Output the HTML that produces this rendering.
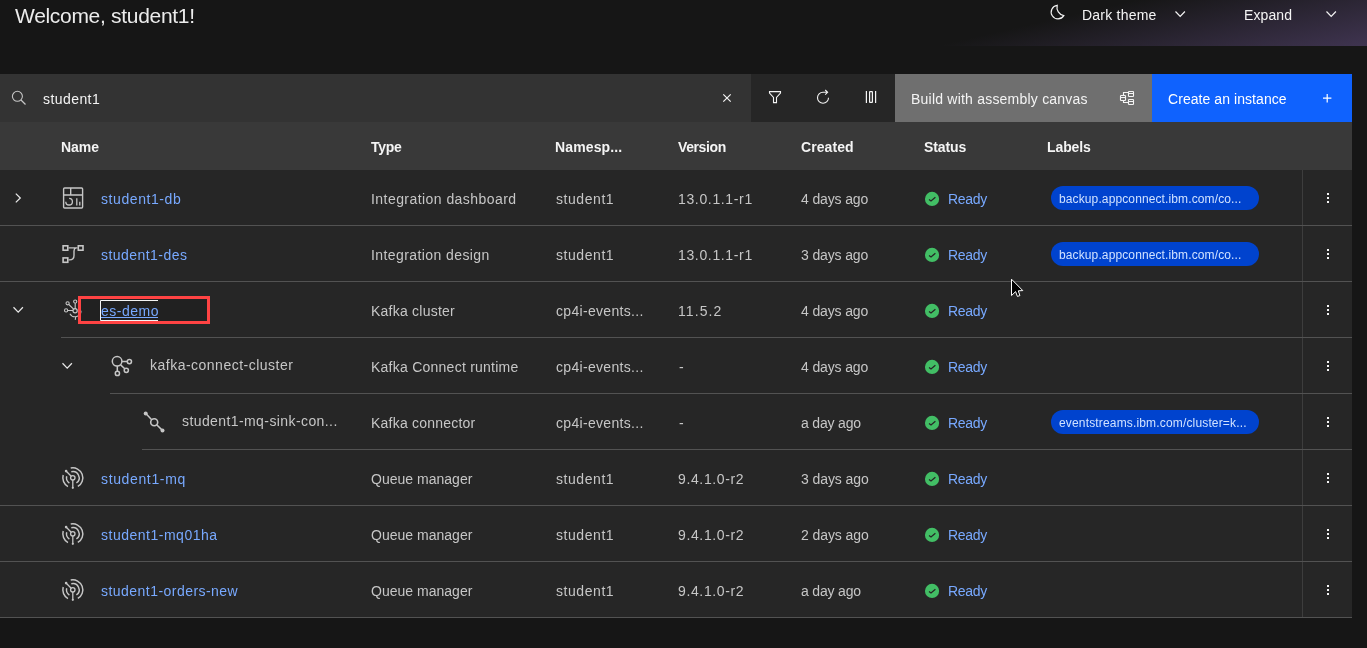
<!DOCTYPE html>
<html><head><meta charset="utf-8">
<style>
*{margin:0;padding:0;box-sizing:border-box}
html,body{width:1367px;height:648px;overflow:hidden;background:#161616;font-family:"Liberation Sans",sans-serif;color:#c6c6c6}
.a{position:absolute;white-space:nowrap;line-height:16px;will-change:transform}
.search{position:absolute;left:0;top:74px;width:751px;height:48px;background:#333333}
.icons{position:absolute;left:751px;top:74px;width:144px;height:48px;background:#262626}
.build{position:absolute;left:895px;top:74px;width:257px;height:48px;background:#6f6f6f}
.create{position:absolute;left:1152px;top:74px;width:200px;height:48px;background:#0f62fe}
.thead{position:absolute;left:0;top:122px;width:1352px;height:48px;background:#393939}
.row{position:absolute;left:0;width:1352px;height:56px;background:#262626}
.bd{position:absolute;height:1px;background:#525252;right:0;bottom:0}
.vdiv{position:absolute;left:1302px;top:0;width:1px;height:55px;background:#3d3d3d}
.tag{position:absolute;left:1051px;width:208px;height:24px;border-radius:12px;background:#0043ce}
.tagt{line-height:24px}
svg{position:absolute;overflow:visible}

</style></head><body>
<svg width="1367" height="46" style="position:absolute;left:0;top:0">
<defs><linearGradient id="g" gradientUnits="userSpaceOnUse" x1="57" y1="248" x2="78.6" y2="342"><stop offset="0" stop-color="#161616"/><stop offset="1" stop-color="#3f3450"/></linearGradient></defs>
<rect width="1367" height="46" fill="url(#g)"/>
</svg>
<div class="search"></div>
<div class="icons"></div>
<div class="build"></div>
<div class="create"></div>
<div class="thead"></div>
<div class="row" style="top:170px"><div class="vdiv"></div><div class="bd" style="left:0px"></div></div>
<div class="tag" style="top:186px"></div>
<div class="row" style="top:226px"><div class="vdiv"></div><div class="bd" style="left:0px"></div></div>
<div class="tag" style="top:242px"></div>
<div class="row" style="top:282px"><div class="vdiv"></div><div class="bd" style="left:61px"></div></div>
<div class="row" style="top:338px"><div class="vdiv"></div><div class="bd" style="left:110px"></div></div>
<div class="row" style="top:394px"><div class="vdiv"></div><div class="bd" style="left:142px"></div></div>
<div class="tag" style="top:410px"></div>
<div class="row" style="top:450px"><div class="vdiv"></div><div class="bd" style="left:0px"></div></div>
<div class="row" style="top:506px"><div class="vdiv"></div><div class="bd" style="left:0px"></div></div>
<div class="row" style="top:562px"><div class="vdiv"></div><div class="bd" style="left:0px"></div></div>
<svg width="1367" height="648" style="left:0;top:0;position:absolute"><path d="M1057.2,5.3 A6.8,6.8 0 1 0 1063.8,15.6 A8.4,8.4 0 0 1 1057.2,5.3 Z" fill="none" stroke="#f4f4f4" stroke-width="1.2" stroke-linejoin="miter"/>
<path d="M1175.5,11.5 L1180.2,16.4 L1184.9,11.5" fill="none" stroke="#f4f4f4" stroke-width="1.2"/>
<path d="M1326.5,11.5 L1331.2,16.4 L1335.9,11.5" fill="none" stroke="#f4f4f4" stroke-width="1.2"/>
<circle cx="17.4" cy="96.3" r="5" fill="none" stroke="#c6c6c6" stroke-width="1.1"/>
<path d="M21,100 L25.5,104.5" stroke="#c6c6c6" stroke-width="1.2"/>
<path d="M723.3,94.3 L730.7,101.7 M730.7,94.3 L723.3,101.7" stroke="#f4f4f4" stroke-width="1.2"/>
<path d="M769.5,91.6 H780.5 V93 L776.5,97.4 V102.6 H773.5 V97.4 L769.5,93 Z" fill="none" stroke="#f4f4f4" stroke-width="1.1" stroke-linejoin="miter"/>
<path d="M823,92.3 A5.5,5.5 0 1 0 828.5,97.8" fill="none" stroke="#f4f4f4" stroke-width="1.1"/>
<path d="M823,92.3 H828 M825.2,90 L827.6,92.3 L825.2,94.6" fill="none" stroke="#f4f4f4" stroke-width="1.1"/>
<path d="M866.4,91 V103 M875.6,91 V103" stroke="#f4f4f4" stroke-width="1.2"/>
<rect x="869.6" y="91.6" width="2.8" height="10.8" rx="0.4" fill="none" stroke="#f4f4f4" stroke-width="1.2"/>
<rect x="1120.5" y="95.5" width="5" height="5" rx="0.6" fill="none" stroke="#f4f4f4" stroke-width="1.1"/>
<rect x="1121" y="97" width="4" height="1" fill="#f4f4f4"/>
<rect x="1128.5" y="91.5" width="5" height="5" rx="0.6" fill="none" stroke="#f4f4f4" stroke-width="1.1"/>
<rect x="1129" y="93" width="4" height="1" fill="#f4f4f4"/>
<rect x="1128.5" y="99.5" width="5" height="5" rx="0.6" fill="none" stroke="#f4f4f4" stroke-width="1.1"/>
<rect x="1129" y="101" width="4" height="1" fill="#f4f4f4"/>
<path d="M1123.5,95 V92.5 H1128 M1123.5,101 V102.5 H1128" fill="none" stroke="#f4f4f4" stroke-width="1.1"/>
<path d="M1327.2,94 V102.4 M1323,98.2 H1331.4" stroke="#ffffff" stroke-width="1.2"/>
<path d="M15.8,193.6 L20.3,198 L15.8,202.4" fill="none" stroke="#e8e8e8" stroke-width="1.25"/>
<path d="M13.5,307.2 L18.2,312.2 L22.9,307.2" fill="none" stroke="#e8e8e8" stroke-width="1.25"/>
<path d="M62.5,363.2 L67.2,368.2 L71.9,363.2" fill="none" stroke="#e8e8e8" stroke-width="1.25"/>
<rect x="63.6" y="188" width="19" height="20" rx="1" fill="none" stroke="#c6c6c6" stroke-width="1.4"/>
<path d="M63.6,195 H82.6 M70.7,188 V195" stroke="#c6c6c6" stroke-width="1.4"/>
<path d="M69.1,198.4 A3.3,3.3 0 1 1 65.8,201.7" fill="none" stroke="#c6c6c6" stroke-width="1.3"/>
<path d="M76.8,198.2 V205.6 M79.8,201.7 V205.6" stroke="#c6c6c6" stroke-width="1.3"/>
<rect x="63.1" y="245.8" width="4.7" height="4.4" fill="none" stroke="#c6c6c6" stroke-width="1.6"/>
<rect x="78.3" y="245.8" width="4.7" height="4.4" fill="none" stroke="#c6c6c6" stroke-width="1.6"/>
<rect x="63.1" y="257.9" width="4.7" height="4.4" fill="none" stroke="#c6c6c6" stroke-width="1.6"/>
<path d="M68.6,247.9 H77.5 M76,247.9 Q74,248.5 74,251 V255.5 Q74,259.9 69.6,259.9 H68.6" fill="none" stroke="#c6c6c6" stroke-width="1.4"/>
<circle cx="75.1" cy="310.7" r="2.1" fill="none" stroke="#c6c6c6" stroke-width="1.2"/>
<circle cx="75.2" cy="301.6" r="1.6" fill="none" stroke="#c6c6c6" stroke-width="1.1"/>
<circle cx="67.6" cy="303.3" r="1.6" fill="none" stroke="#c6c6c6" stroke-width="1.1"/>
<circle cx="66.1" cy="310.4" r="1.6" fill="none" stroke="#c6c6c6" stroke-width="1.1"/>
<path d="M75.2,303.2 V308.6 M68.8,304.5 L73.6,309.2 M67.7,310.5 H73 M69.9,313.7 A6,6 0 0 0 81.1,310.7 M75.8,316.6 L75.2,319.8" fill="none" stroke="#c6c6c6" stroke-width="1.1"/>
<circle cx="117.1" cy="361.3" r="4.8" fill="none" stroke="#c6c6c6" stroke-width="1.5"/>
<circle cx="129.4" cy="361.6" r="2.1" fill="none" stroke="#c6c6c6" stroke-width="1.5"/>
<circle cx="126.3" cy="370.3" r="2.1" fill="none" stroke="#c6c6c6" stroke-width="1.5"/>
<circle cx="117.4" cy="373.4" r="2.1" fill="none" stroke="#c6c6c6" stroke-width="1.5"/>
<path d="M121.9,361.5 H127.3 M120.6,364.9 L124.8,368.8 M117.3,366.1 V371.3" fill="none" stroke="#c6c6c6" stroke-width="1.5"/>
<circle cx="154.2" cy="422.3" r="3.5" fill="none" stroke="#c6c6c6" stroke-width="1.6"/>
<circle cx="145.7" cy="413.5" r="2" fill="#c6c6c6"/>
<circle cx="162.5" cy="430.5" r="2" fill="#c6c6c6"/>
<path d="M145.8,413.6 L151.7,419.8 M156.7,424.8 L162.4,430.4" stroke="#c6c6c6" stroke-width="1.5"/>
<circle cx="72.8" cy="477.8" r="2.2" fill="none" stroke="#c6c6c6" stroke-width="1.3"/>
<path d="M72.8,480.0 V487.8" stroke="#c6c6c6" stroke-width="1.3" fill="none"/>
<circle cx="72.8" cy="487.8" r="1.1" fill="#c6c6c6"/>
<path d="M71.2,476.2 L66.3,471.3" stroke="#c6c6c6" stroke-width="1.3" fill="none"/>
<circle cx="66.1" cy="471.1" r="1.3" fill="#c6c6c6"/>
<path d="M70.72,468.02 A10.0,10.0 0 0 1 77.80,486.46" stroke="#c6c6c6" stroke-width="1.45" fill="none"/>
<path d="M71.28,471.69 A6.3,6.3 0 0 1 76.41,482.96" stroke="#c6c6c6" stroke-width="1.45" fill="none"/>
<path d="M67.95,486.55 A10.0,10.0 0 0 1 63.19,475.04" stroke="#c6c6c6" stroke-width="1.45" fill="none"/>
<path d="M69.37,483.08 A6.3,6.3 0 0 1 66.69,476.28" stroke="#c6c6c6" stroke-width="1.45" fill="none"/>
<circle cx="72.8" cy="533.8" r="2.2" fill="none" stroke="#c6c6c6" stroke-width="1.3"/>
<path d="M72.8,536.0 V543.8" stroke="#c6c6c6" stroke-width="1.3" fill="none"/>
<circle cx="72.8" cy="543.8" r="1.1" fill="#c6c6c6"/>
<path d="M71.2,532.1999999999999 L66.3,527.3" stroke="#c6c6c6" stroke-width="1.3" fill="none"/>
<circle cx="66.1" cy="527.0999999999999" r="1.3" fill="#c6c6c6"/>
<path d="M70.72,524.02 A10.0,10.0 0 0 1 77.80,542.46" stroke="#c6c6c6" stroke-width="1.45" fill="none"/>
<path d="M71.28,527.69 A6.3,6.3 0 0 1 76.41,538.96" stroke="#c6c6c6" stroke-width="1.45" fill="none"/>
<path d="M67.95,542.55 A10.0,10.0 0 0 1 63.19,531.04" stroke="#c6c6c6" stroke-width="1.45" fill="none"/>
<path d="M69.37,539.08 A6.3,6.3 0 0 1 66.69,532.28" stroke="#c6c6c6" stroke-width="1.45" fill="none"/>
<circle cx="72.8" cy="589.8" r="2.2" fill="none" stroke="#c6c6c6" stroke-width="1.3"/>
<path d="M72.8,592.0 V599.8" stroke="#c6c6c6" stroke-width="1.3" fill="none"/>
<circle cx="72.8" cy="599.8" r="1.1" fill="#c6c6c6"/>
<path d="M71.2,588.1999999999999 L66.3,583.3" stroke="#c6c6c6" stroke-width="1.3" fill="none"/>
<circle cx="66.1" cy="583.0999999999999" r="1.3" fill="#c6c6c6"/>
<path d="M70.72,580.02 A10.0,10.0 0 0 1 77.80,598.46" stroke="#c6c6c6" stroke-width="1.45" fill="none"/>
<path d="M71.28,583.69 A6.3,6.3 0 0 1 76.41,594.96" stroke="#c6c6c6" stroke-width="1.45" fill="none"/>
<path d="M67.95,598.55 A10.0,10.0 0 0 1 63.19,587.04" stroke="#c6c6c6" stroke-width="1.45" fill="none"/>
<path d="M69.37,595.08 A6.3,6.3 0 0 1 66.69,588.28" stroke="#c6c6c6" stroke-width="1.45" fill="none"/>
<circle cx="932.05" cy="198.95" r="7.1" fill="#42be65"/>
<path d="M929,199.39999999999998 L931,200.89999999999998 L935.4,197.29999999999998" fill="none" stroke="#262626" stroke-width="1.3"/>
<rect x="1327" y="193" width="2" height="2" fill="#f4f4f4"/>
<rect x="1327" y="197" width="2" height="2" fill="#f4f4f4"/>
<rect x="1327" y="201" width="2" height="2" fill="#f4f4f4"/>
<circle cx="932.05" cy="254.95" r="7.1" fill="#42be65"/>
<path d="M929,255.39999999999998 L931,256.9 L935.4,253.29999999999998" fill="none" stroke="#262626" stroke-width="1.3"/>
<rect x="1327" y="249" width="2" height="2" fill="#f4f4f4"/>
<rect x="1327" y="253" width="2" height="2" fill="#f4f4f4"/>
<rect x="1327" y="257" width="2" height="2" fill="#f4f4f4"/>
<circle cx="932.05" cy="310.95" r="7.1" fill="#42be65"/>
<path d="M929,311.4 L931,312.9 L935.4,309.3" fill="none" stroke="#262626" stroke-width="1.3"/>
<rect x="1327" y="305" width="2" height="2" fill="#f4f4f4"/>
<rect x="1327" y="309" width="2" height="2" fill="#f4f4f4"/>
<rect x="1327" y="313" width="2" height="2" fill="#f4f4f4"/>
<circle cx="932.05" cy="366.95" r="7.1" fill="#42be65"/>
<path d="M929,367.4 L931,368.9 L935.4,365.3" fill="none" stroke="#262626" stroke-width="1.3"/>
<rect x="1327" y="361" width="2" height="2" fill="#f4f4f4"/>
<rect x="1327" y="365" width="2" height="2" fill="#f4f4f4"/>
<rect x="1327" y="369" width="2" height="2" fill="#f4f4f4"/>
<circle cx="932.05" cy="422.95" r="7.1" fill="#42be65"/>
<path d="M929,423.4 L931,424.9 L935.4,421.3" fill="none" stroke="#262626" stroke-width="1.3"/>
<rect x="1327" y="417" width="2" height="2" fill="#f4f4f4"/>
<rect x="1327" y="421" width="2" height="2" fill="#f4f4f4"/>
<rect x="1327" y="425" width="2" height="2" fill="#f4f4f4"/>
<circle cx="932.05" cy="478.95" r="7.1" fill="#42be65"/>
<path d="M929,479.4 L931,480.9 L935.4,477.3" fill="none" stroke="#262626" stroke-width="1.3"/>
<rect x="1327" y="473" width="2" height="2" fill="#f4f4f4"/>
<rect x="1327" y="477" width="2" height="2" fill="#f4f4f4"/>
<rect x="1327" y="481" width="2" height="2" fill="#f4f4f4"/>
<circle cx="932.05" cy="534.95" r="7.1" fill="#42be65"/>
<path d="M929,535.4000000000001 L931,536.9000000000001 L935.4,533.3000000000001" fill="none" stroke="#262626" stroke-width="1.3"/>
<rect x="1327" y="529" width="2" height="2" fill="#f4f4f4"/>
<rect x="1327" y="533" width="2" height="2" fill="#f4f4f4"/>
<rect x="1327" y="537" width="2" height="2" fill="#f4f4f4"/>
<circle cx="932.05" cy="590.95" r="7.1" fill="#42be65"/>
<path d="M929,591.4000000000001 L931,592.9000000000001 L935.4,589.3000000000001" fill="none" stroke="#262626" stroke-width="1.3"/>
<rect x="1327" y="585" width="2" height="2" fill="#f4f4f4"/>
<rect x="1327" y="589" width="2" height="2" fill="#f4f4f4"/>
<rect x="1327" y="593" width="2" height="2" fill="#f4f4f4"/>
<rect x="79.5" y="297.5" width="129" height="25" fill="rgba(0,0,0,0.12)" stroke="#ff4343" stroke-width="3"/>
<path d="M158,300.5 H100.5 V320.5 H158" fill="none" stroke="#f4f4f4" stroke-width="1"/>
<path d="M101,317.5 H158" stroke="#78a9ff" stroke-width="1"/>
<path d="M1011.5,279.2 L1011.5,295.6 L1015.6,291.6 L1017.4,296.4 L1019.9,295.6 L1018.3,290.8 L1022.8,290.6 Z" fill="#000" stroke="#fff" stroke-width="1" stroke-linejoin="miter"/></svg>
<div id="welcome" class="a " style="left:15px;top:8px;font-size:21px;font-weight:400;color:#ececec;letter-spacing:-0.307px">Welcome, student1!</div>
<div id="dark" class="a " style="left:1082px;top:7px;font-size:14px;font-weight:400;color:#f4f4f4;letter-spacing:0.222px">Dark theme</div>
<div id="expand" class="a " style="left:1244px;top:7px;font-size:14px;font-weight:400;color:#f4f4f4;letter-spacing:0.100px">Expand</div>
<div id="search" class="a " style="left:43px;top:91px;font-size:14px;font-weight:400;color:#f4f4f4;letter-spacing:0.429px">student1</div>
<div id="build" class="a " style="left:911px;top:91px;font-size:14px;font-weight:400;color:#f4f4f4;letter-spacing:0.216px">Build with assembly canvas</div>
<div id="create" class="a " style="left:1168px;top:91px;font-size:14px;font-weight:400;color:#ffffff;letter-spacing:0.064px">Create an instance</div>
<div id="h0" class="a " style="left:61px;top:139px;font-size:14px;font-weight:700;color:#f4f4f4;letter-spacing:-0.033px">Name</div>
<div id="h1" class="a " style="left:371px;top:139px;font-size:14px;font-weight:700;color:#f4f4f4;letter-spacing:-0.300px">Type</div>
<div id="h2" class="a " style="left:555px;top:139px;font-size:14px;font-weight:700;color:#f4f4f4;letter-spacing:0.125px">Namesp...</div>
<div id="h3" class="a " style="left:678px;top:139px;font-size:14px;font-weight:700;color:#f4f4f4;letter-spacing:-0.400px">Version</div>
<div id="h4" class="a " style="left:801px;top:139px;font-size:14px;font-weight:700;color:#f4f4f4;letter-spacing:0.067px">Created</div>
<div id="h5" class="a " style="left:924px;top:139px;font-size:14px;font-weight:700;color:#f4f4f4;letter-spacing:-0.120px">Status</div>
<div id="h6" class="a " style="left:1047px;top:139px;font-size:14px;font-weight:700;color:#f4f4f4;letter-spacing:-0.100px">Labels</div>
<div id="r0n" class="a " style="left:101px;top:191px;font-size:14px;font-weight:400;color:#78a9ff;letter-spacing:0.580px">student1-db</div>
<div id="r0t" class="a " style="left:371px;top:191px;font-size:14px;font-weight:400;color:#c6c6c6;letter-spacing:0.445px">Integration dashboard</div>
<div id="r0s" class="a " style="left:556px;top:191px;font-size:14px;font-weight:400;color:#c6c6c6;letter-spacing:0.557px">student1</div>
<div id="r0v" class="a " style="left:678px;top:191px;font-size:14px;font-weight:400;color:#c6c6c6;letter-spacing:0.650px">13.0.1.1-r1</div>
<div id="r0c" class="a " style="left:801px;top:191px;font-size:14px;font-weight:400;color:#c6c6c6;letter-spacing:-0.132px">4 days ago</div>
<div id="r0r" class="a " style="left:948px;top:191px;font-size:14px;font-weight:400;color:#78a9ff;letter-spacing:-0.300px">Ready</div>
<div id="r0l" class="a tagt" style="left:1059px;top:187px;font-size:12px;font-weight:400;color:#d0e2ff;letter-spacing:0.117px">backup.appconnect.ibm.com/co...</div>
<div id="r1n" class="a " style="left:101px;top:247px;font-size:14px;font-weight:400;color:#78a9ff;letter-spacing:0.455px">student1-des</div>
<div id="r1t" class="a " style="left:371px;top:247px;font-size:14px;font-weight:400;color:#c6c6c6;letter-spacing:0.412px">Integration design</div>
<div id="r1s" class="a " style="left:556px;top:247px;font-size:14px;font-weight:400;color:#c6c6c6;letter-spacing:0.557px">student1</div>
<div id="r1v" class="a " style="left:678px;top:247px;font-size:14px;font-weight:400;color:#c6c6c6;letter-spacing:0.650px">13.0.1.1-r1</div>
<div id="r1c" class="a " style="left:801px;top:247px;font-size:14px;font-weight:400;color:#c6c6c6;letter-spacing:-0.132px">3 days ago</div>
<div id="r1r" class="a " style="left:948px;top:247px;font-size:14px;font-weight:400;color:#78a9ff;letter-spacing:-0.300px">Ready</div>
<div id="r1l" class="a tagt" style="left:1059px;top:243px;font-size:12px;font-weight:400;color:#d0e2ff;letter-spacing:0.117px">backup.appconnect.ibm.com/co...</div>
<div id="r2n" class="a " style="left:101px;top:303px;font-size:14px;font-weight:400;color:#78a9ff;letter-spacing:0.500px">es-demo</div>
<div id="r2t" class="a " style="left:371px;top:303px;font-size:14px;font-weight:400;color:#c6c6c6;letter-spacing:0.234px">Kafka cluster</div>
<div id="r2s" class="a " style="left:556px;top:303px;font-size:14px;font-weight:400;color:#c6c6c6;letter-spacing:0.308px">cp4i-events...</div>
<div id="r2v" class="a " style="left:678px;top:303px;font-size:14px;font-weight:400;color:#c6c6c6;letter-spacing:1.100px">11.5.2</div>
<div id="r2c" class="a " style="left:801px;top:303px;font-size:14px;font-weight:400;color:#c6c6c6;letter-spacing:-0.132px">4 days ago</div>
<div id="r2r" class="a " style="left:948px;top:303px;font-size:14px;font-weight:400;color:#78a9ff;letter-spacing:-0.300px">Ready</div>
<div id="r3n" class="a " style="left:150px;top:357px;font-size:14px;font-weight:400;color:#c6c6c6;letter-spacing:0.490px">kafka-connect-cluster</div>
<div id="r3t" class="a " style="left:371px;top:359px;font-size:14px;font-weight:400;color:#c6c6c6;letter-spacing:0.245px">Kafka Connect runtime</div>
<div id="r3s" class="a " style="left:556px;top:359px;font-size:14px;font-weight:400;color:#c6c6c6;letter-spacing:0.308px">cp4i-events...</div>
<div id="r3v" class="a " style="left:679px;top:359px;font-size:14px;font-weight:400;color:#c6c6c6;letter-spacing:-0.600px">-</div>
<div id="r3c" class="a " style="left:801px;top:359px;font-size:14px;font-weight:400;color:#c6c6c6;letter-spacing:-0.132px">4 days ago</div>
<div id="r3r" class="a " style="left:948px;top:359px;font-size:14px;font-weight:400;color:#78a9ff;letter-spacing:-0.300px">Ready</div>
<div id="r4n" class="a " style="left:182px;top:413px;font-size:14px;font-weight:400;color:#c6c6c6;letter-spacing:0.409px">student1-mq-sink-con...</div>
<div id="r4t" class="a " style="left:371px;top:415px;font-size:14px;font-weight:400;color:#c6c6c6;letter-spacing:0.222px">Kafka connector</div>
<div id="r4s" class="a " style="left:556px;top:415px;font-size:14px;font-weight:400;color:#c6c6c6;letter-spacing:0.308px">cp4i-events...</div>
<div id="r4v" class="a " style="left:679px;top:415px;font-size:14px;font-weight:400;color:#c6c6c6;letter-spacing:-0.600px">-</div>
<div id="r4c" class="a " style="left:801px;top:415px;font-size:14px;font-weight:400;color:#c6c6c6;letter-spacing:-0.175px">a day ago</div>
<div id="r4r" class="a " style="left:948px;top:415px;font-size:14px;font-weight:400;color:#78a9ff;letter-spacing:-0.300px">Ready</div>
<div id="r4l" class="a tagt" style="left:1059px;top:411px;font-size:12px;font-weight:400;color:#d0e2ff;letter-spacing:0.160px">eventstreams.ibm.com/cluster=k...</div>
<div id="r5n" class="a " style="left:101px;top:471px;font-size:14px;font-weight:400;color:#78a9ff;letter-spacing:0.640px">student1-mq</div>
<div id="r5t" class="a " style="left:371px;top:471px;font-size:14px;font-weight:400;color:#c6c6c6;letter-spacing:0.016px">Queue manager</div>
<div id="r5s" class="a " style="left:556px;top:471px;font-size:14px;font-weight:400;color:#c6c6c6;letter-spacing:0.557px">student1</div>
<div id="r5v" class="a " style="left:678px;top:471px;font-size:14px;font-weight:400;color:#c6c6c6;letter-spacing:0.633px">9.4.1.0-r2</div>
<div id="r5c" class="a " style="left:801px;top:471px;font-size:14px;font-weight:400;color:#c6c6c6;letter-spacing:-0.090px">3 days ago</div>
<div id="r5r" class="a " style="left:948px;top:471px;font-size:14px;font-weight:400;color:#78a9ff;letter-spacing:-0.300px">Ready</div>
<div id="r6n" class="a " style="left:101px;top:527px;font-size:14px;font-weight:400;color:#78a9ff;letter-spacing:0.508px">student1-mq01ha</div>
<div id="r6t" class="a " style="left:371px;top:527px;font-size:14px;font-weight:400;color:#c6c6c6;letter-spacing:0.016px">Queue manager</div>
<div id="r6s" class="a " style="left:556px;top:527px;font-size:14px;font-weight:400;color:#c6c6c6;letter-spacing:0.557px">student1</div>
<div id="r6v" class="a " style="left:678px;top:527px;font-size:14px;font-weight:400;color:#c6c6c6;letter-spacing:0.633px">9.4.1.0-r2</div>
<div id="r6c" class="a " style="left:801px;top:527px;font-size:14px;font-weight:400;color:#c6c6c6;letter-spacing:-0.090px">2 days ago</div>
<div id="r6r" class="a " style="left:948px;top:527px;font-size:14px;font-weight:400;color:#78a9ff;letter-spacing:-0.300px">Ready</div>
<div id="r7n" class="a " style="left:101px;top:583px;font-size:14px;font-weight:400;color:#78a9ff;letter-spacing:0.462px">student1-orders-new</div>
<div id="r7t" class="a " style="left:371px;top:583px;font-size:14px;font-weight:400;color:#c6c6c6;letter-spacing:0.016px">Queue manager</div>
<div id="r7s" class="a " style="left:556px;top:583px;font-size:14px;font-weight:400;color:#c6c6c6;letter-spacing:0.557px">student1</div>
<div id="r7v" class="a " style="left:678px;top:583px;font-size:14px;font-weight:400;color:#c6c6c6;letter-spacing:0.633px">9.4.1.0-r2</div>
<div id="r7c" class="a " style="left:801px;top:583px;font-size:14px;font-weight:400;color:#c6c6c6;letter-spacing:-0.175px">a day ago</div>
<div id="r7r" class="a " style="left:948px;top:583px;font-size:14px;font-weight:400;color:#78a9ff;letter-spacing:-0.300px">Ready</div>
</body></html>
